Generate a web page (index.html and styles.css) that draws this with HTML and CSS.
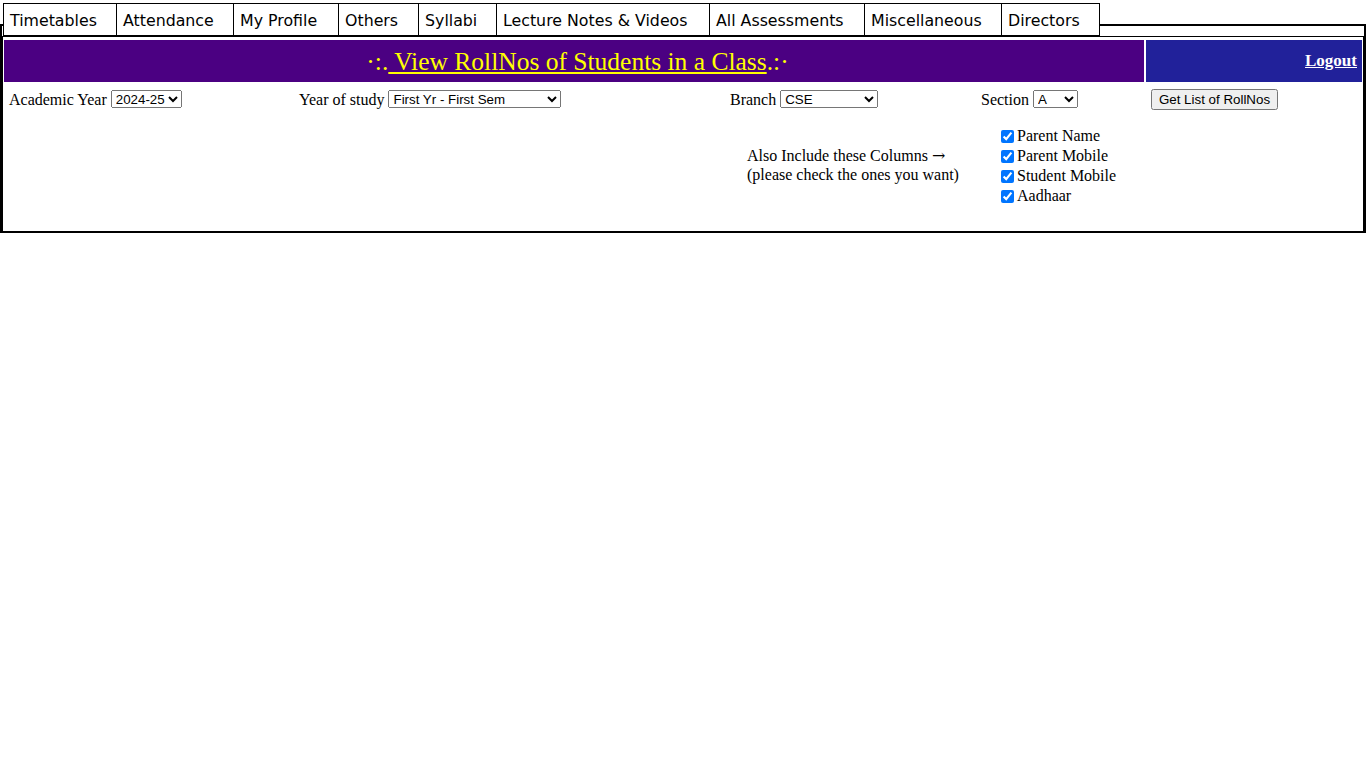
FILE: index.html
```html
<!DOCTYPE html>
<html>
<head>
<meta charset="utf-8">
<title>View RollNos of Students in a Class</title>
<link rel="stylesheet" href="styles.css">
</head>
<body>
<ul class="tabs">
  <li class="tab w1">Timetables</li>
  <li class="tab w2">Attendance</li>
  <li class="tab w3">My Profile</li>
  <li class="tab w4">Others</li>
  <li class="tab w5">Syllabi</li>
  <li class="tab w6">Lecture Notes &amp; Videos</li>
  <li class="tab w7">All Assessments</li>
  <li class="tab w8">Miscellaneous</li>
  <li class="tab w9">Directors</li>
</ul>
<div class="box">
  <div class="panel">
    <div class="header">
      <div class="title">·:.<a href="#" class="title-link"> View RollNos of Students in a Class</a>.:·</div>
      <div class="logout"><a href="#">Logout</a></div>
    </div>
    <form class="filters">
      <div class="cell c1">Academic Year <select class="sel-year"><option>2024-25</option></select></div>
      <div class="cell c2">Year of study <select class="sel-study"><option>First Yr - First Sem</option></select></div>
      <div class="cell c3">Branch <select class="sel-branch"><option>CSE</option></select></div>
      <div class="cell c4">Section <select class="sel-section"><option>A</option></select></div>
      <div class="cell c5"><button type="button" class="btn">Get List of RollNos</button></div>
    </form>
    <div class="extras">
      <div class="extras-text">Also Include these Columns <span class="arrow">→</span><br>(please check the ones you want)</div>
      <div class="checks">
        <label class="chk"><input type="checkbox" checked>Parent Name</label>
        <label class="chk"><input type="checkbox" checked>Parent Mobile</label>
        <label class="chk"><input type="checkbox" checked>Student Mobile</label>
        <label class="chk"><input type="checkbox" checked>Aadhaar</label>
      </div>
    </div>
  </div>
</div>
</body>
</html>
```
FILE: styles.css
```css
html, body {
  margin: 0;
  padding: 0;
  background: #fff;
  font-family: "Liberation Serif", "Times New Roman", serif;
  font-size: 16px;
  color: #000;
}

.tabs {
  list-style: none;
  margin: 3px 0 -12px 3px;
  padding: 0;
  display: flex;
  position: relative;
  z-index: 2;
  width: max-content;
}

.tab {
  box-sizing: border-box;
  height: 33px;
  border: 1px solid #000;
  margin-left: -1px;
  background: #fff;
  font-family: "DejaVu Sans", Verdana, sans-serif;
  font-size: 15.8px;
  line-height: 31px;
  padding-top: 1px;
  padding-left: 6px;
  white-space: nowrap;
}
.tab.w1 { margin-left: 0; width: 114px; }
.tab.w2 { width: 118px; }
.tab.w3 { width: 106px; }
.tab.w4 { width: 81px; }
.tab.w5 { width: 79px; }
.tab.w6 { width: 214px; }
.tab.w7 { width: 156px; }
.tab.w8 { width: 138px; }
.tab.w9 { width: 99px; }

.box {
  border: 2px solid #000;
  padding-top: 10px;
  padding-bottom: 0;
  position: relative;
  z-index: 1;
}

.panel {
  border: 1px solid #000;
  border-bottom: 0;
  padding: 3px 1px 25px 1px;
}

.header {
  display: flex;
  gap: 2px;
  height: 42px;
}

.title {
  box-sizing: border-box;
  width: 1140px;
  padding-left: 7px;
  background: #4b0082;
  color: #ffff00;
  font-family: "Liberation Serif", "Times New Roman", serif;
  font-size: 25.5px;
  text-align: center;
  line-height: 44px;
}
.title-link {
  color: #ffff00;
  text-decoration: underline;
}

.logout {
  flex: 1;
  background: #21219a;
  text-align: right;
  padding-right: 5px;
  line-height: 42px;
  font-weight: bold;
  font-size: 17px;
}
.logout a {
  color: #fff;
  text-decoration: underline;
}

.filters {
  display: grid;
  grid-template-columns: 290px 431px 251px 170px 1fr;
  padding: 6px 0 0 5px;
  margin: 0;
  height: 22px;
  align-items: center;
}

.cell {
  white-space: nowrap;
}

select {
  font-family: Arial, "Liberation Sans", sans-serif;
  font-size: 13.33px;
  height: 18px;
  vertical-align: 1px;
}
.sel-year { width: 71px; }
.sel-study { width: 173px; }
.sel-branch { width: 98px; }
.sel-section { width: 45px; }

.btn {
  font-family: Arial, "Liberation Sans", sans-serif;
  font-size: 13.33px;
  width: 127px;
  height: 21px;
  padding: 0;
}

.extras {
  display: flex;
  align-items: center;
  padding-left: 743px;
  margin-top: 16px;
}

.extras-text {
  width: 254px;
  line-height: 19px;
  padding-bottom: 3px;
}

.arrow {
  font-family: "DejaVu Serif", serif;
  font-size: 16px;
  line-height: 1;
}

.checks {
  display: flex;
  flex-direction: column;
}

.chk {
  line-height: 20px;
  display: flex;
  align-items: center;
}
.chk input {
  margin: 0 3px 0 0;
  width: 13px;
  height: 13px;
}
```
